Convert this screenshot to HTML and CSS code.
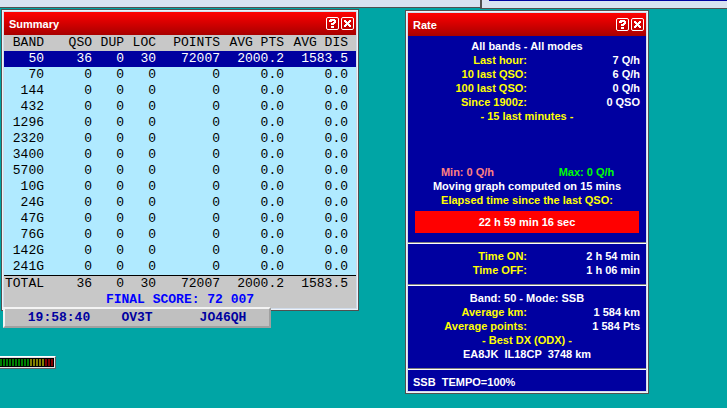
FILE: index.html
```
<!DOCTYPE html>
<html lang="en">
<head>
  <meta charset="UTF-8" />
  <title>Contest Log</title>
  <link rel="stylesheet" href="styles.css">
</head>
<body>
  <main class="desktop">
    <!-- Windows that run off the top of the desktop -->
    <div class="edge-window edge-left"></div>
    <div class="edge-window edge-right"></div>

    <!-- Summary -->
    <section class="window summary-window">
      <header class="title-bar">
        <h2>Summary</h2>
        <button type="button" class="title-button" aria-label="Help">
          <svg viewBox="0 0 11 11" shape-rendering="crispEdges"><path d="M3 1h5v1h1v3H8v1H7v1H4V5h2V4h1V3H5v1H2V2h1zM4 8h3v2H4z" /></svg>
        </button>
        <button type="button" class="title-button" aria-label="Close">
          <svg viewBox="0 0 11 11" shape-rendering="crispEdges"><path d="M2 2h2v1h1v1h1V3h1V2h2v2H8v1H7v1h1v1h1v2H7V8H6V7H5v1H4v1H2V7h1V6h1V5H3V4H2z" /></svg>
        </button>
      </header>
      <table class="summary-table">
        <colgroup>
          <col class="col-band"><col class="col-qso"><col class="col-small"><col class="col-small">
          <col class="col-wide"><col class="col-wide"><col class="col-last">
        </colgroup>
        <thead>
          <tr><th>BAND</th><th>QSO</th><th>DUP</th><th>LOC</th><th>POINTS</th><th>AVG PTS</th><th>AVG DIS</th></tr>
        </thead>
        <tbody>
          <tr class="selected"><td>50</td><td>36</td><td>0</td><td>30</td><td>72007</td><td>2000.2</td><td>1583.5</td></tr>
          <tr><td>70</td><td>0</td><td>0</td><td>0</td><td>0</td><td>0.0</td><td>0.0</td></tr>
          <tr><td>144</td><td>0</td><td>0</td><td>0</td><td>0</td><td>0.0</td><td>0.0</td></tr>
          <tr><td>432</td><td>0</td><td>0</td><td>0</td><td>0</td><td>0.0</td><td>0.0</td></tr>
          <tr><td>1296</td><td>0</td><td>0</td><td>0</td><td>0</td><td>0.0</td><td>0.0</td></tr>
          <tr><td>2320</td><td>0</td><td>0</td><td>0</td><td>0</td><td>0.0</td><td>0.0</td></tr>
          <tr><td>3400</td><td>0</td><td>0</td><td>0</td><td>0</td><td>0.0</td><td>0.0</td></tr>
          <tr><td>5700</td><td>0</td><td>0</td><td>0</td><td>0</td><td>0.0</td><td>0.0</td></tr>
          <tr><td>10G</td><td>0</td><td>0</td><td>0</td><td>0</td><td>0.0</td><td>0.0</td></tr>
          <tr><td>24G</td><td>0</td><td>0</td><td>0</td><td>0</td><td>0.0</td><td>0.0</td></tr>
          <tr><td>47G</td><td>0</td><td>0</td><td>0</td><td>0</td><td>0.0</td><td>0.0</td></tr>
          <tr><td>76G</td><td>0</td><td>0</td><td>0</td><td>0</td><td>0.0</td><td>0.0</td></tr>
          <tr><td>142G</td><td>0</td><td>0</td><td>0</td><td>0</td><td>0.0</td><td>0.0</td></tr>
          <tr><td>241G</td><td>0</td><td>0</td><td>0</td><td>0</td><td>0.0</td><td>0.0</td></tr>
        </tbody>
        <tfoot>
          <tr><td>TOTAL</td><td>36</td><td>0</td><td>30</td><td>72007</td><td>2000.2</td><td>1583.5</td></tr>
        </tfoot>
      </table>
      <p class="final-score">FINAL SCORE: 72 007</p>
    </section>

    <!-- Clock, call sign and locator -->
    <section class="station-bar">
      <span>19:58:40</span>
      <span>OV3T</span>
      <span>JO46QH</span>
    </section>

    <!-- Level meter -->
    <div class="meter">
      <div class="meter-scale">
        <i class="green"></i><i class="green"></i><i class="green"></i><i class="green"></i><i class="green"></i>
        <i class="green"></i><i class="green"></i><i class="green"></i><i class="green"></i><i class="green"></i>
        <i class="olive"></i><i class="olive"></i><i class="olive"></i><i class="olive"></i><i class="olive"></i>
        <i class="maroon"></i><i class="maroon"></i><i class="maroon"></i>
      </div>
    </div>

    <!-- Rate -->
    <section class="window rate-window">
      <header class="title-bar">
        <h2>Rate</h2>
        <button type="button" class="title-button" aria-label="Help">
          <svg viewBox="0 0 11 11" shape-rendering="crispEdges"><path d="M3 1h5v1h1v3H8v1H7v1H4V5h2V4h1V3H5v1H2V2h1zM4 8h3v2H4z" /></svg>
        </button>
        <button type="button" class="title-button" aria-label="Close">
          <svg viewBox="0 0 11 11" shape-rendering="crispEdges"><path d="M2 2h2v1h1v1h1V3h1V2h2v2H8v1H7v1h1v1h1v2H7V8H6V7H5v1H4v1H2V7h1V6h1V5H3V4H2z" /></svg>
        </button>
      </header>

      <div class="panel panel-rates">
        <p>All bands - All modes</p>
        <dl>
          <dt>Last hour:</dt><dd>7 Q/h</dd>
          <dt>10 last QSO:</dt><dd>6 Q/h</dd>
          <dt>100 last QSO:</dt><dd>0 Q/h</dd>
          <dt>Since 1900z:</dt><dd>0 QSO</dd>
        </dl>
        <p class="yellow">- 15 last minutes -</p>
        <div class="graph"></div>
        <div class="min-max">
          <span class="min">Min: 0 Q/h</span>
          <span class="max">Max: 0 Q/h</span>
        </div>
        <p>Moving graph computed on 15 mins</p>
        <p class="yellow">Elapsed time since the last QSO:</p>
        <p class="elapsed">22 h 59 min 16 sec</p>
      </div>

      <div class="panel">
        <dl>
          <dt>Time ON:</dt><dd>2 h 54 min</dd>
          <dt>Time OFF:</dt><dd>1 h 06 min</dd>
        </dl>
      </div>

      <div class="panel">
        <p>Band: 50 - Mode: SSB</p>
        <dl>
          <dt>Average km:</dt><dd>1 584 km</dd>
          <dt>Average points:</dt><dd>1 584 Pts</dd>
        </dl>
        <p class="yellow">- Best DX (ODX) -</p>
        <p>EA8JK  IL18CP  3748 km</p>
      </div>

      <div class="panel panel-status"><p>SSB  TEMPO=100%</p></div>
    </section>
  </main>
</body>
</html>
```
FILE: styles.css
```
* {
  margin: 0;
  padding: 0;
  box-sizing: border-box;
}
body {
  font-family: "Liberation Sans", Arial, sans-serif;
  font-size: 11px;
  font-weight: bold;
  line-height: 14px;
  color: #fff;
}
.desktop {
  position: relative;
  min-height: 100vh;
  overflow: hidden;
  background: #00a5a5;
}

/* Windows cut by the top edge */
.edge-window {
  position: absolute;
  top: 0;
  background: #d8e2f0;
  border-bottom: 1px solid #505050;
}
.edge-left {
  left: 0;
  width: 481px;
  height: 8px;
  border-right: 1px solid #505050;
}
.edge-right {
  left: 480px;
  right: 0;
  height: 9px;
  padding-left: 7px;
  border-left: 2px solid #505050;
}
.edge-right::before {
  content: "";
  display: block;
  height: 1px;
  background: #0000a0;
}

/* Window frame */
.window {
  position: absolute;
  border: 1px solid #505050;
  box-shadow: inset 0 0 0 1px #eef2f8;
  background: #d0dbea;
}
.title-bar {
  display: flex;
  align-items: center;
  gap: 2px;
  height: 23px;
  padding: 0 2px 0 5px;
  background: linear-gradient(#ff0000, #a80000);
}
.title-bar h2 {
  flex: 1;
  font-size: 11px;
}
.title-button {
  width: 13px;
  height: 13px;
  border: 1px solid #fff;
  border-radius: 2px;
  background: transparent;
}
.title-button svg {
  display: block;
  width: 11px;
  height: 11px;
  fill: #fff;
}

/* Summary */
.summary-window {
  left: 1px;
  top: 9px;
  width: 358px;
  padding: 2px;
  font-family: "Liberation Mono", "Courier New", monospace;
  font-size: 13px;
}
.summary-window h2 {
  font-family: "Liberation Sans", Arial, sans-serif;
}
.summary-table {
  width: 100%;
  table-layout: fixed;
  border-collapse: collapse;
  background: #b0eaff;
  color: #000;
  line-height: 16px;
  white-space: nowrap;
}
.summary-table th,
.summary-table td {
  font-weight: normal;
  text-align: right;
}
.summary-table th:last-child,
.summary-table td:last-child {
  padding-right: 8px;
}
.summary-table thead,
.summary-table tfoot {
  background: #c8c8c8;
}
.summary-table tfoot td {
  border-top: 1px solid #000;
}
.summary-table .selected {
  background: #0000a0;
  color: #fff;
}
.col-band { width: 40px; }
.col-qso { width: 48px; }
.col-small { width: 32px; }
.col-wide { width: 64px; }
.final-score {
  background: #c8c8c8;
  color: #0000ff;
  line-height: 16px;
  text-align: center;
}

/* Station bar */
.station-bar {
  position: absolute;
  left: 3px;
  top: 307px;
  width: 268px;
  display: grid;
  grid-template-columns: 1fr 64px 1fr;
  padding: 2px 0 1px;
  border: 2px outset #f4f4f4;
  background: #c0c0c0;
  color: #0000a0;
  font-family: "Liberation Mono", "Courier New", monospace;
  font-size: 13px;
  text-align: center;
}
.station-bar span {
  padding-left: 8px;
}
.station-bar span:nth-child(2) {
  padding-left: 0;
}

/* Level meter */
.meter {
  position: absolute;
  left: 0;
  top: 356px;
  padding: 1px 1px 1px 0;
  border: 1px solid #fff;
  border-left: 0;
  border-right-color: #606060;
  border-bottom-color: #606060;
  background: #e0e0e0;
}
.meter-scale {
  display: flex;
  gap: 1px;
  padding: 1px 1px 1px 0;
  background: #000;
}
.meter i {
  width: 2px;
  height: 7px;
}
.green { background: #008000; }
.olive { background: #808000; }
.maroon { background: #800000; }

/* Rate */
.rate-window {
  left: 405px;
  top: 10px;
  width: 244px;
  padding: 2px;
}
.panel {
  padding: 6px 0 7px;
  border-top: 1px solid #808080;
  box-shadow: inset 0 1px 0 #fff;
  background: #0000a0;
  text-align: center;
}
.panel p {
  white-space: pre;
}
.panel dl {
  display: grid;
  grid-template-columns: 1fr 1fr;
}
.panel dt {
  color: #ffff00;
  text-align: right;
}
.panel dd {
  padding-right: 6px;
  text-align: right;
}
.panel-rates {
  padding: 3px 0 9px;
  border-top: 0;
  box-shadow: none;
}
.yellow {
  color: #ffff00;
}
.graph {
  height: 42px;
}
.min-max {
  display: grid;
  grid-template-columns: 1fr 1fr;
}
.min { color: #ff8080; }
.max { color: #00ff00; }
.panel .elapsed {
  margin: 4px 7px 0;
  background: #ff0000;
  line-height: 22px;
}
.panel-status {
  padding: 6px 5px 2px;
  text-align: left;
}
```
